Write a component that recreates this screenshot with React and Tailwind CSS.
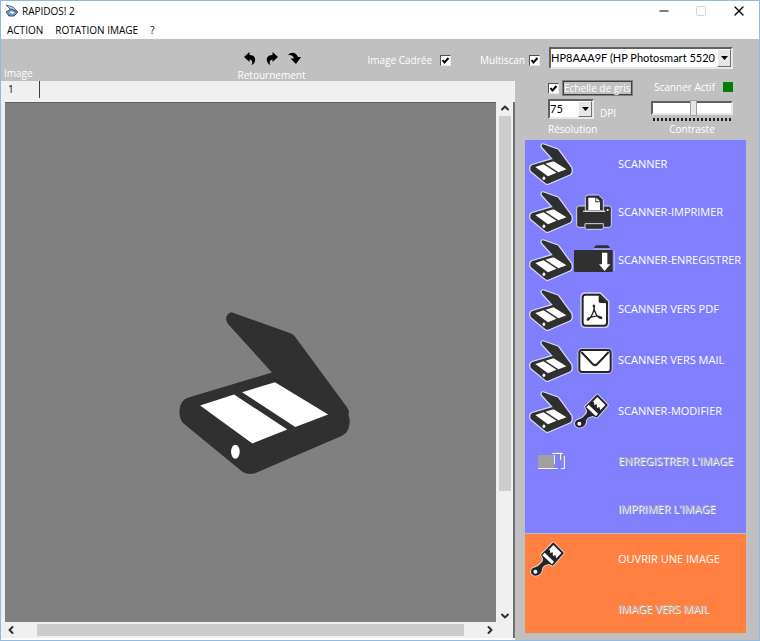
import React from "react";
import { ChevronDown, ChevronLeft, ChevronRight, ChevronUp, Minus, Square, X } from "lucide-react";

function ScannerShape({ className, outlined }) {
  return (
    <svg viewBox={outlined ? "42 20 544 518" : "54 32 522 496"} className={className} aria-hidden="true">
      <path
        d="M214 36 L390 98 Q400 101 406 110 L562 322 Q570 332 566 345 Q572 360 568 378 Q565 398 545 408 L285 520 Q265 526 248 516 L72 372 Q56 358 58 330 Q60 300 85 292 L336 217 L203 70 Q195 58 200 46 Q206 37 214 36Z"
        fill="#303030"
        stroke={outlined ? "#dcdcf4" : "none"}
        strokeWidth="30"
        strokeLinejoin="round"
        paintOrder="stroke"
      />
      <path d="M120 316 L222 283 L382 388 L277 430Z M246 276 L345 246 L505 343 L406 381Z" fill="#fff" />
      <ellipse cx="226" cy="455" rx={outlined ? 17 : 13} ry="21" fill="#fff" />
    </svg>
  );
}

function PrinterIcon() {
  return (
    <svg viewBox="159 159 132 132" className="size-11" aria-hidden="true">
      <g stroke="#d4d4f0" strokeWidth="3">
        <rect x="170" y="207" width="104" height="64" rx="8" fill="#303030" />
        <path d="M196 222 V182 Q196 174 204 174 H236 L250 188 V222Z" fill="#303030" />
        <path d="M195 260 H250 V272 Q250 277 244 277 H201 Q195 277 195 272Z" fill="#303030" />
      </g>
      <path d="M205 182 H226 V196 H240 V219 H205Z" fill="#fff" />
      <path d="M229 182 L240 193 H229Z" fill="#fff" />
      <path d="M189 223 H256" stroke="#d4d4f0" strokeWidth="4" />
      <circle cx="263" cy="219" r="3" fill="#fff" />
    </svg>
  );
}

function FolderIcon() {
  return (
    <svg viewBox="159 306 132 132" className="size-11" aria-hidden="true">
      <path d="M221 337 L227 328 H264 L271 337Z" fill="#303030" />
      <path d="M221 339 H271" stroke="#c0c0e8" strokeWidth="3" />
      <rect x="162" y="342" width="116" height="66" rx="3" fill="#303030" />
      <path d="M283 344 V404" stroke="#d4d4f0" strokeWidth="2" />
      <path d="M246 350 H262 V385 H271 L254 405 L237 385 H246Z" fill="#fff" />
    </svg>
  );
}

function PdfIcon() {
  return (
    <svg viewBox="159 9 132 132" className="size-11" aria-hidden="true">
      <path
        d="M196 27 H240 L263 50 V114 Q263 124 253 124 H196 Q186 124 186 114 V37 Q186 27 196 27Z"
        fill="none"
        stroke="#d4d4f0"
        strokeWidth="10"
      />
      <path
        d="M196 29 H239 L261 51 V113 Q261 122 252 122 H197 Q188 122 188 113 V38 Q188 29 196 29Z"
        fill="#fff"
        stroke="#252525"
        strokeWidth="6"
      />
      <path d="M236 29 L261 54 H241 Q236 54 236 49Z" fill="#252525" />
      <path
        d="M221 65 C217 59 225 58 223 68 C221 82 213 96 206 104 C200 109 200 101 208 98 C220 93 234 92 243 96 C249 101 242 102 236 97 C227 90 223 77 221 65Z"
        fill="none"
        stroke="#252525"
        strokeWidth="4"
        strokeLinejoin="round"
      />
    </svg>
  );
}

function MailIcon() {
  return (
    <svg viewBox="159 164 132 132" className="size-11" aria-hidden="true">
      <rect x="177" y="196" width="96" height="68" rx="9" fill="#fff" stroke="#d4d4f0" strokeWidth="9" />
      <rect x="178" y="197" width="94" height="66" rx="8" fill="#fff" stroke="#252525" strokeWidth="6" />
      <path d="M184 203 L218 239 Q225 246 232 239 L266 203" fill="none" stroke="#252525" strokeWidth="6" />
    </svg>
  );
}

function BrushIcon() {
  return (
    <svg viewBox="7 0 132 132" className="size-11" aria-hidden="true">
      <path
        d="M80 13 L112 45 L79 83 L66 78 C56 80 48 84 46 92 C46 104 38 113 26 113 C15 113 10 103 15 94 C20 86 31 89 38 80 C46 73 50 68 49 62 L43 50Z"
        fill="#252525"
        stroke="#e8e0e8"
        strokeWidth="5"
        strokeLinejoin="round"
        paintOrder="stroke"
      />
      <path d="M80 21 L104 45 L89 61 L86 51 L79 54 L78 42 L71 46 L70 36 L66 36Z" fill="#fff" />
      <path d="M54 44 L82 71 L76 79 L47 52Z" fill="#fff" />
      <circle cx="26" cy="101" r="6" fill="#fff" />
    </svg>
  );
}

function SaveDisabledIcon() {
  return (
    <svg viewBox="0 0 30 20" className="ml-2 h-5 w-[30px]" aria-hidden="true">
      <path d="M1 4 H18 V17 H1Z" fill="#a0a0a0" />
      <path d="M1 17.500 H21 M15 2.500 H26 M17.500 4 V13 M23.500 3 V9 M27.500 5 V17.500 H24" fill="none" stroke="#f0f0ff" strokeWidth="1" />
      <path d="M17 1.500 H25 M24.500 4 V10 M26.500 5 V16" stroke="#a0a0a0" strokeWidth="1" />
    </svg>
  );
}

function TurnArrow({ label, children }) {
  return (
    <button type="button" aria-label={label} className="size-4">
      <svg viewBox="0 0 16 16" className="size-4" fill="#000" aria-hidden="true">
        {children}
      </svg>
    </button>
  );
}

const TURN = "M2 6 L7.500 1 V4 C12 4 14 7 13 10 C12.500 12.500 11 13.500 9.500 14 C11 11.500 10.500 9 7.500 8.500 V11Z";

const scanActions = [
  { label: "SCANNER", scanner: true },
  { label: "SCANNER-IMPRIMER", scanner: true, icon: PrinterIcon },
  { label: "SCANNER-ENREGISTRER", scanner: true, icon: FolderIcon },
  { label: "SCANNER VERS PDF", scanner: true, icon: PdfIcon, tall: true },
  { label: "SCANNER VERS MAIL", scanner: true, icon: MailIcon, tall: true },
  { label: "SCANNER-MODIFIER", scanner: true, icon: BrushIcon, tall: true },
  { label: "ENREGISTRER L'IMAGE", first: SaveDisabledIcon, disabled: true },
  { label: "IMPRIMER L'IMAGE", disabled: true },
];

const imageActions = [
  { label: "OUVRIR UNE IMAGE", first: BrushIcon, tall: true },
  { label: "IMAGE VERS MAIL", disabled: true },
];

function ActionButton({ action }) {
  const First = action.first;
  const Icon = action.icon;
  return (
    <button
      type="button"
      disabled={action.disabled}
      className={`flex w-full items-center pl-1 text-left text-[11px] whitespace-nowrap ${action.tall ? "h-[51px]" : "h-12"} ${
        action.disabled ? "text-[#b4b4b4] [text-shadow:1px_1px_0_#fff]" : "text-white"
      }`}
    >
      <span className="flex w-11 shrink-0 items-center">
        {action.scanner && <ScannerShape outlined className="size-11" />}
        {First && <First />}
      </span>
      <span className="w-[45px] shrink-0">{Icon && <Icon />}</span>
      {action.label}
    </button>
  );
}

function Check({ id, label, before, boxed, className }) {
  const text = (
    <label
      htmlFor={id}
      className={boxed ? "border border-[#404040] leading-3 outline outline-[#808080]" : "leading-4"}
    >
      {label}
    </label>
  );
  return (
    <div className={`flex items-center ${className}`}>
      {before && text}
      <span className="relative flex size-[11px]">
        <input
          id={id}
          type="checkbox"
          defaultChecked
          className="peer size-[11px] appearance-none border border-t-[#505050] border-r-[#e8e8e8] border-b-[#e8e8e8] border-l-[#505050] bg-white"
        />
        <svg
          viewBox="0 0 11 11"
          className="pointer-events-none absolute inset-0 hidden size-[11px] peer-checked:block"
          aria-hidden="true"
        >
          <path d="M2.500 5 L4.500 7.500 L8.500 3" fill="none" stroke="#000" strokeWidth="2" />
        </svg>
      </span>
      {!before && text}
    </div>
  );
}

function Dropdown({ id, label, value, className }) {
  return (
    <div className={`relative ${className}`}>
      <select
        id={id}
        aria-label={label}
        className="h-full w-full appearance-none border-2 border-t-[#606060] border-r-[#e8e8e8] border-b-[#e8e8e8] border-l-[#606060] bg-white pr-[14px] font-[Lato,sans-serif] text-[11px] text-black"
      >
        <option>{value}</option>
      </select>
      <span className="pointer-events-none absolute inset-y-[2px] right-[2px] flex w-[14px] items-center justify-center border border-t-white border-r-[#707070] border-b-[#707070] border-l-white bg-[#e6e6e6]">
        <svg viewBox="0 0 7 4" className="h-1 w-[7px]" aria-hidden="true">
          <path d="M0 0 H7 L3.500 4Z" />
        </svg>
      </span>
    </div>
  );
}

export default function App() {
  return (
    <div className="flex min-h-screen flex-col border border-[#8fbbe0] bg-[#c0c0c0] font-['Open_Sans','Noto_Sans',sans-serif] text-[10px] text-white">
      <header className="bg-white text-[10px] text-black">
        <div className="flex h-5 items-center pl-1">
          <svg viewBox="0 0 14 14" className="size-[14px]" aria-hidden="true">
            <path d="M1 1 L8 3 L12 7 L6 6Z" fill="#b8cce0" stroke="#54708e" />
            <path d="M1 8 L6 5 L13 8 L9 12 L4 12Z" fill="#7192b8" stroke="#39577c" />
            <path d="M4 8 L7 7 L10 9 L7 10Z" fill="#eaf2fa" />
          </svg>
          <h1 className="ml-[3px]">RAPIDOS! 2</h1>
          <div className="mr-3 ml-auto flex items-center gap-6">
            <button type="button" aria-label="Réduire">
              <Minus className="size-[14px]" strokeWidth={2} />
            </button>
            <button type="button" aria-label="Agrandir" disabled className="text-[#d4d4d4]">
              <Square className="size-3" strokeWidth={2} />
            </button>
            <button type="button" aria-label="Fermer">
              <X className="size-4" strokeWidth={2} />
            </button>
          </div>
        </div>
        <nav className="flex h-[18px] items-center gap-3 pl-1.5">
          <button type="button">ACTION</button>
          <button type="button">ROTATION IMAGE</button>
          <button type="button">?</button>
        </nav>
      </header>

      <div className="flex h-[42px] shrink-0 pr-[26px] pl-[3px]">
        <span className="self-end leading-4">Image</span>
        <div className="ml-auto flex flex-col items-center pt-3">
          <div className="flex gap-1.5">
            <TurnArrow label="Tourner à gauche">
              <path d={TURN} />
            </TurnArrow>
            <TurnArrow label="Tourner à droite">
              <path d={TURN} transform="matrix(-1 0 0 1 16 0)" />
            </TurnArrow>
            <TurnArrow label="Retourner">
              <path d="M2 4 C5 0.500 10 1 12 6 H15 L10 13 L4.500 7.500 H8 C7 4.500 5 3.500 2 4Z" />
            </TurnArrow>
          </div>
          <span className="leading-4">Retournement</span>
        </div>
        <Check id="cadree" label="Image Cadrée" before className="ml-[62px] gap-2" />
        <Check id="multiscan" label="Multiscan" before className="ml-[29px] gap-1" />
        <Dropdown
          id="device"
          label="Scanner"
          value="HP8AAA9F (HP Photosmart 5520"
          className="mt-2 ml-[9px] h-[22px] w-[184px]"
        />
      </div>

      <div className="flex flex-1">
        <main className="flex min-w-0 flex-1 flex-col border-b-2 border-white bg-[#f0f0f0] pl-1">
          <div className="flex h-[17px] text-black">
            <button type="button" className="w-[35px] border-r border-[#404040] pl-[3px] text-left">
              1
            </button>
          </div>
          <div className="mt-1 flex flex-1 border-r-2 border-[#707070]">
            <div className="flex min-w-0 flex-1 flex-col">
              <div className="flex flex-1 items-center justify-center border-t border-[#606060] bg-[#808080] pt-[62px] pl-7">
                <ScannerShape className="h-[165px] w-[174px]" />
              </div>
              <div className="flex h-4 items-center text-[#303030]">
                <ChevronLeft className="size-3" strokeWidth={4} />
                <div className="ml-5 h-3 flex-1 bg-[#cdcdcd]" />
                <ChevronRight className="ml-5 size-3" strokeWidth={4} />
              </div>
            </div>
            <div className="flex w-[17px] flex-col items-center pb-4 text-[#303030]">
              <ChevronUp className="size-3 shrink-0" strokeWidth={4} />
              <div className="mt-0.5 w-3 flex-[76] bg-[#cdcdcd]" />
              <div className="flex-[24]" />
              <ChevronDown className="size-3 shrink-0" strokeWidth={4} />
            </div>
          </div>
        </main>

        <aside className="w-[244px] shrink-0 pr-[13px] pb-1 pl-[10px]">
          <div className="flex h-[59px] justify-between pr-[13px] pl-[23px]">
            <div>
              <Check id="gris" label="Echelle de gris" boxed className="gap-1" />
              <div className="mt-1 flex items-end gap-1.5">
                <Dropdown id="dpi" label="Résolution" value="75" className="h-5 w-[46px]" />
                <span className="leading-3">DPI</span>
              </div>
              <label htmlFor="dpi" className="block leading-5">
                Résolution
              </label>
            </div>
            <div className="flex w-[82px] flex-col">
              <div className="flex items-center justify-end gap-2 leading-3 whitespace-nowrap">
                Scanner Actif
                <span className="size-[10px] shrink-0 bg-[#008000]" />
              </div>
              <input
                id="contraste"
                type="range"
                defaultValue="52"
                className="mt-2 h-[14px] w-full appearance-none border-2 border-t-[#606060] border-r-[#e8e8e8] border-b-[#e8e8e8] border-l-[#606060] bg-white [&::-webkit-slider-thumb]:h-4 [&::-webkit-slider-thumb]:w-[7px] [&::-webkit-slider-thumb]:appearance-none [&::-webkit-slider-thumb]:border [&::-webkit-slider-thumb]:border-[#a0a0a0] [&::-webkit-slider-thumb]:bg-[#e6e6e6]"
              />
              <div className="mx-0.5 mt-[3px] h-[3px] shrink-0 bg-[repeating-linear-gradient(90deg,#202020_0_2px,transparent_2px_4px)]" />
              <label htmlFor="contraste" className="text-center leading-4">
                Contraste
              </label>
            </div>
          </div>

          <section className="bg-[#8080ff]">
            {scanActions.map((action) => (
              <ActionButton key={action.label} action={action} />
            ))}
          </section>
          <section className="mt-px bg-[#ff8040]">
            {imageActions.map((action) => (
              <ActionButton key={action.label} action={action} />
            ))}
          </section>
        </aside>
      </div>
    </div>
  );
}
